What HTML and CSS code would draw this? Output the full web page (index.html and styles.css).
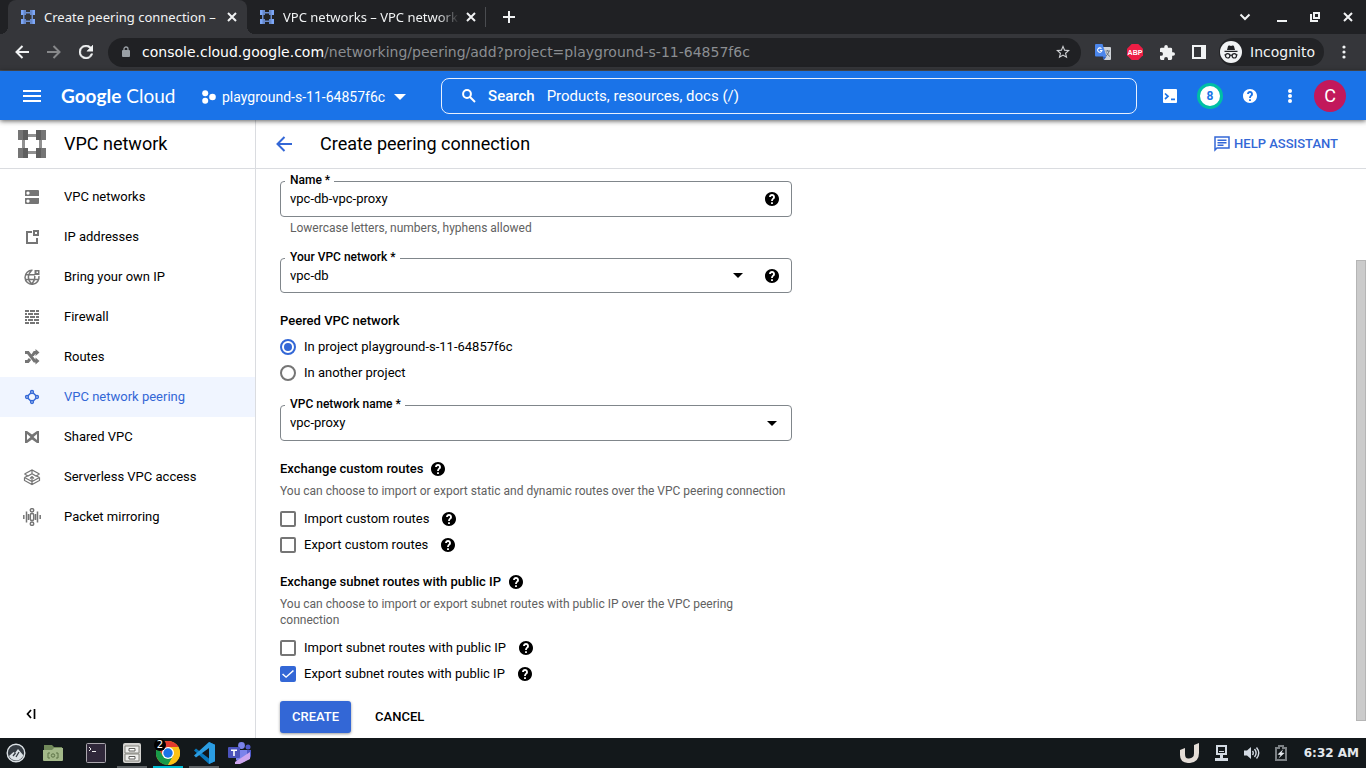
FILE: index.html
```html
<!DOCTYPE html>
<html lang="en">
<head>
<meta charset="utf-8">
<title>Create peering connection – VPC network</title>
<link rel="stylesheet" href="styles.css">
</head>
<body>
<svg class="defs" aria-hidden="true">
  <symbol id="vpc" viewBox="0 0 28 28">
    <path fill="currentColor" d="M9 4h10v3H9zM9 21h10v3H9zM4 9h3v10H4zM21 9h3v10h-3z" opacity=".8"/>
    <path fill="currentColor" d="M0 0h10v10H0zM18 0h10v10H18zM0 18h10v10H0zM18 18h10v10H18z"/>
    <path fill="#000" opacity=".18" d="M5 0h5v10H5zM18 0h5v10h-5zM5 18h5v10H5zM18 18h5v10h-5z"/>
  </symbol>
  <symbol id="help" viewBox="2 2 20 20">
    <path fill="currentColor" d="M12 2C6.48 2 2 6.48 2 12s4.48 10 10 10 10-4.48 10-10S17.52 2 12 2zm1.3 17h-2.600v-2.500h2.600zm2.200-7.500l-.9.92C13.700 13.100 13.300 13.700 13.300 15h-2.600v-.5c0-1.200.5-2.300 1.170-3l1.240-1.260c.3-.3.400-.7.400-1.100 0-.9-.7-1.500-1.500-1.500s-1.500.7-1.500 1.500H7.800c0-2.300 1.900-4.200 4.200-4.200s4.200 1.900 4.200 4.200c0 .88-.3 1.700-.7 2.400z"/>
  </symbol>
  <symbol id="close" viewBox="0 0 10 10"><path d="M1 1l8 8M9 1L1 9" stroke="currentColor" stroke-width="2"/></symbol>
  <symbol id="caret" viewBox="0 0 10 5"><path fill="currentColor" d="M0 0h10L5 5z"/></symbol>
</svg>

<header class="tabstrip">
  <div class="tab tab-active">
    <svg class="favicon" width="14" height="14"><use href="#vpc"/></svg>
    <span class="tab-title">Create peering connection –</span>
    <button class="bare tab-close" aria-label="Close tab"><svg width="10" height="10"><use href="#close"/></svg></button>
  </div>
  <div class="tab tab-idle">
    <svg class="favicon" width="14" height="14"><use href="#vpc"/></svg>
    <span class="tab-title">VPC networks – VPC network</span>
    <button class="bare tab-close" aria-label="Close tab"><svg width="10" height="10"><use href="#close"/></svg></button>
  </div>
  <button class="bare new-tab" aria-label="New tab"><svg width="12" height="12" viewBox="0 0 12 12"><path d="M6 0v12M0 6h12" stroke="currentColor" stroke-width="2"/></svg></button>
  <div class="window-controls">
    <button class="bare" aria-label="Search tabs"><svg width="12" height="8" viewBox="0 0 12 8"><path d="M1.500 1.500L6 6l4.500-4.500" fill="none" stroke="currentColor" stroke-width="2"/></svg></button>
    <button class="bare" aria-label="Minimise"><svg width="10" height="10" viewBox="0 0 10 10"><path d="M0 9h10" stroke="currentColor" stroke-width="2"/></svg></button>
    <button class="bare" aria-label="Restore"><svg width="10" height="10" viewBox="0 0 10 10" fill="none" stroke="currentColor" stroke-width="2"><path d="M4 1h5v5H4z"/><path d="M1 2v7h7"/></svg></button>
    <button class="bare" aria-label="Close window"><svg width="10" height="10"><use href="#close"/></svg></button>
  </div>
</header>

<nav class="toolbar" aria-label="Browser">
  <button class="bare" aria-label="Back"><svg width="14" height="14" viewBox="0 0 14 14" fill="none" stroke="currentColor" stroke-width="2"><path d="M14 7H1.500M7.500 1l-6 6 6 6"/></svg></button>
  <button class="bare dim" aria-label="Forward"><svg width="14" height="14" viewBox="0 0 14 14" fill="none" stroke="currentColor" stroke-width="2"><path d="M0 7h12.500M6.500 1l6 6-6 6"/></svg></button>
  <button class="bare" aria-label="Reload"><svg width="14" height="14" viewBox="4 4 16 16"><path fill="currentColor" stroke="currentColor" stroke-width=".6" d="M17.650 6.350A8 8 0 1 0 19.730 14h-2.080A6 6 0 1 1 12 6c1.660 0 3.140.69 4.220 1.780L13 11h7V4z"/></svg></button>
  <div class="urlbar">
    <svg width="8" height="12" viewBox="0 0 8 12"><rect y="4" width="8" height="7" rx="1" fill="#9aa0a6"/><path d="M2 5V3a2 2 0 0 1 4 0v2" fill="none" stroke="#9aa0a6" stroke-width="1.300"/></svg>
    <span class="url"><b>console.cloud.google.com</b>/networking/peering/add?project=playground-s-11-64857f6c</span>
    <button class="bare" aria-label="Bookmark"><svg width="14" height="14" viewBox="2 2 20 20"><path fill="currentColor" d="M22 9.240l-7.190-.62L12 2 9.190 8.630 2 9.240l5.460 4.730L5.820 21 12 17.270 18.180 21l-1.630-7.030zM12 15.400l-3.760 2.270 1-4.280-3.320-2.880 4.380-.38L12 6.100l1.710 4.040 4.380.38-3.320 2.880 1 4.280z"/></svg></button>
  </div>
  <button class="bare" aria-label="Translate"><svg width="16" height="16" viewBox="0 0 16 16"><path fill="#cfd3d8" d="M6 3h9a1 1 0 0 1 1 1v11a1 1 0 0 1-1 1H9z"/><path fill="#4b86ec" d="M1 0h6.500l4 12.500H1a1 1 0 0 1-1-1V1a1 1 0 0 1 1-1z"/><path fill="#2b5fc4" d="M7.500 12.500h4L9 16z"/><path d="M6.500 4.600A2.200 2.200 0 1 0 7 6.500H5" fill="none" stroke="#fff" stroke-width="1.100"/><path d="M10.500 7h4.500M12.500 6v1M14 7q-.5 3-3 5M11.500 8.500q1 2.500 3.500 4" fill="none" stroke="#6d7781"/></svg></button>
  <button class="bare" aria-label="Adblock Plus"><svg width="16" height="16" viewBox="0 0 16 16"><path fill="#ed1e45" d="M4.700 0h6.600L16 4.700v6.600L11.300 16H4.700L0 11.300V4.700z"/><text x="8" y="10.700" class="abp">ABP</text></svg></button>
  <button class="bare" aria-label="Extensions"><svg width="15" height="15" viewBox="2 1 21 21"><path fill="currentColor" d="M20.500 11H19V7a2 2 0 0 0-2-2h-4V3.500a2.500 2.500 0 0 0-5 0V5H4a2 2 0 0 0-2 2v3.800h1.500a2.700 2.700 0 0 1 0 5.400H2V20a2 2 0 0 0 2 2h3.800v-1.500a2.700 2.700 0 0 1 5.400 0V22H17a2 2 0 0 0 2-2v-4h1.500a2.500 2.500 0 0 0 0-5z"/></svg></button>
  <button class="bare" aria-label="Side panel"><svg width="14" height="14" viewBox="0 0 14 14"><path fill="currentColor" fill-rule="evenodd" d="M0 0h14v14H0zM2 2v10h7V2z"/></svg></button>
  <div class="incognito">
    <svg width="22" height="22" viewBox="0 0 22 22"><circle cx="11" cy="11" r="11" fill="#f1f3f4"/><path fill="#202124" d="M7 9l1-3.700Q8.500 4 9.500 4.600q1.500.6 3 0Q13.500 4 14 5.300L15 9zM4.500 9.800h13V11h-13z"/><g fill="none" stroke="#202124" stroke-width="1.200"><circle cx="7.700" cy="14.800" r="2.200"/><circle cx="14.300" cy="14.800" r="2.200"/><path d="M10 14.500q1-.7 2 0M4.500 13.800h1M16.500 13.800h1"/></g></svg>
    <span>Incognito</span>
  </div>
  <button class="bare menu" aria-label="Menu"><svg width="4" height="14" viewBox="0 0 4 14" fill="currentColor"><circle cx="2" cy="2" r="1.600"/><circle cx="2" cy="7" r="1.600"/><circle cx="2" cy="12" r="1.600"/></svg></button>
</nav>

<header class="console-bar">
  <button class="bare" aria-label="Navigation menu"><svg width="18" height="12" viewBox="0 0 18 12"><path fill="currentColor" d="M0 0h18v2H0zM0 5h18v2H0zM0 10h18v2H0z"/></svg></button>
  <a class="brand" href="#"><b>Google</b> Cloud</a>
  <button class="bare project">
    <svg width="14" height="14" viewBox="0 0 14 14" fill="currentColor"><circle cx="3.200" cy="3.200" r="3"/><circle cx="3.200" cy="10.800" r="3"/><circle cx="10.500" cy="7" r="3.300"/></svg>
    <span>playground-s-11-64857f6c</span>
    <svg width="12" height="6" class="project-caret"><use href="#caret"/></svg>
  </button>
  <label class="search">
    <svg width="14" height="14" viewBox="0 0 14 14" fill="none" stroke="currentColor" stroke-width="2"><circle cx="5" cy="5" r="3.900"/><path d="M8 8l5 5"/></svg>
    <b>Search</b>
    <input type="search" placeholder="Products, resources, docs (/)">
  </label>
  <div class="console-actions">
    <button class="bare" aria-label="Cloud Shell"><svg width="14" height="14" viewBox="0 0 14 14"><rect width="14" height="14" rx="1" fill="#fff"/><path d="M2 4.500L5 7.300 2 10M8 10.300h4" fill="none" stroke="#1a73e8" stroke-width="1.700"/></svg></button>
    <button class="bare count" aria-label="8 notifications">8</button>
    <button class="bare" aria-label="Help"><svg width="14" height="14"><use href="#help"/></svg></button>
    <button class="bare" aria-label="More"><svg width="4" height="14" viewBox="0 0 4 14" fill="currentColor"><circle cx="2" cy="2" r="2"/><circle cx="2" cy="7" r="2"/><circle cx="2" cy="12" r="2"/></svg></button>
    <button class="bare avatar" aria-label="Account">C</button>
  </div>
</header>

<div class="workspace">
  <aside class="sidebar">
    <div class="product">
      <svg width="28" height="28"><use href="#vpc"/></svg>
      <h2>VPC network</h2>
    </div>
    <nav class="side-nav" aria-label="VPC network">
      <a href="#"><svg width="18" height="18" viewBox="0 0 18 18"><path fill="currentColor" fill-rule="evenodd" d="M2 3a1 1 0 0 1 1-1h12a1 1 0 0 1 1 1v5H2zM5 3.500a1.600 1.600 0 1 0 .01 0zM2 10h14v5a1 1 0 0 1-1 1H3a1 1 0 0 1-1-1zM5 11.500a1.600 1.600 0 1 0 .01 0z"/></svg>VPC networks</a>
      <a href="#"><svg width="18" height="18" viewBox="0 0 18 18"><path fill="none" stroke="currentColor" stroke-width="2" d="M9 4H4v11h10V10"/><path fill="currentColor" fill-rule="evenodd" d="M10 2h6v6h-6zM12 4v2h2V4z"/></svg>IP addresses</a>
      <a href="#"><svg width="18" height="18" viewBox="0 0 18 18"><g fill="none" stroke="currentColor" stroke-width="1.500"><path d="M9.500 2.300A7 7 0 1 0 15.900 8M2.500 6.700H12M2.300 11.500h13.400M8.500 2.500c-4 4-4 9 0 13.500 2.500-2.500 3.500-5 3.300-8"/></g><path fill="currentColor" d="M11.500 2h5v5h-5z"/><path fill="#fff" d="M13.500 3.500h1.500V5h-1.500z"/></svg>Bring your own IP</a>
      <a href="#"><svg width="18" height="18" viewBox="0 0 18 18"><path d="M2 3h4M7 3h5M13 3h3M2 6h2M5 6h5M11 6h5M2 9h4M7 9h5M13 9h3M2 12h2M5 12h5M11 12h5M2 15h4M7 15h5M13 15h3" stroke="currentColor" stroke-width="1.800"/></svg>Firewall</a>
      <a href="#"><svg width="18" height="18" viewBox="0 0 18 18"><g fill="none" stroke="currentColor" stroke-width="3"><path d="M2 4.500h3l6.500 8.500H14M2 13.500h3l2-2.500M9.500 7.500l2-3H14"/></g><path fill="currentColor" d="M12.500 1l4 3.500-4 3.500zM12.500 9.500l4 3.500-4 3.500z"/></svg>Routes</a>
      <a href="#" class="selected" aria-current="page"><svg width="18" height="18" viewBox="0 0 18 18" fill="none" stroke="currentColor" stroke-width="1.500"><circle cx="9" cy="4" r="1.400"/><circle cx="9" cy="14" r="1.400"/><circle cx="4" cy="9" r="1.400"/><circle cx="14" cy="9" r="1.400"/><path d="M7.800 5L5 7.800M10.200 5l2.800 2.800M5 10.200L7.800 13M13 10.200L10.200 13"/></svg>VPC network peering</a>
      <a href="#"><svg width="18" height="18" viewBox="0 0 18 18"><path fill="currentColor" fill-rule="evenodd" d="M2 3h2l5 3.500L14 3h2v12h-2l-5-3.500L4 15H2zM4 6v6l3.500-3zM14 6v6l-3.500-3z"/></svg>Shared VPC</a>
      <a href="#"><svg width="18" height="18" viewBox="0 0 18 18" fill="none" stroke="currentColor" stroke-width="1.200"><path d="M1.500 6L9 2l7.500 4M1.500 6L5 8l4-2.300L13 8l3.500-2M1.500 9.500L5 7.800M16.500 9.500L13 7.800M1.500 9.500v3L9 16.500l7.500-4v-3M1.500 9.500L9 13.500l7.500-4M9 2v3.700M9 9v7M7 10.500l2-2 2 2"/></svg>Serverless VPC access</a>
      <a href="#"><svg width="18" height="18" viewBox="0 0 18 18" fill="none" stroke="currentColor" stroke-width="1.500"><circle cx="9" cy="2.300" r="1.700"/><circle cx="9" cy="15.700" r="1.700"/><rect x="7.300" y="5.500" width="3.400" height="7" rx="1.500"/><path d="M.8 7v4M3.500 3.500v11M14.500 3.500v11M17.200 7v4M5.500 6v6M12.500 6v6"/></svg>Packet mirroring</a>
    </nav>
    <button class="bare collapse" aria-label="Collapse menu"><svg width="10" height="10" viewBox="0 0 10 10" fill="none" stroke="currentColor" stroke-width="1.700"><path d="M5 1L1.500 5 5 9M8.500 0v10"/></svg></button>
  </aside>

  <main class="page">
    <div class="page-head">
      <button class="bare back" aria-label="Back"><svg width="16" height="16" viewBox="0 0 16 16" fill="none" stroke="currentColor" stroke-width="2"><path d="M16 8H1.500M8.500 1l-7 7 7 7"/></svg></button>
      <h1>Create peering connection</h1>
      <button class="bare assistant"><svg width="16" height="16" viewBox="0 0 16 16" fill="none" stroke="currentColor" stroke-width="1.500"><path d="M1 14V1h14v11H3z"/><path d="M3.500 4.200h9M3.500 6.700h9M3.500 9.200h6"/></svg>HELP ASSISTANT</button>
    </div>
    <div class="page-body">
      <form class="form">
        <div class="field">
          <label for="name">Name *</label>
          <input id="name" type="text" value="vpc-db-vpc-proxy">
          <button type="button" class="bare help" aria-label="Help: name"><svg width="14" height="14"><use href="#help"/></svg></button>
        </div>
        <p class="hint">Lowercase letters, numbers, hyphens allowed</p>
        <div class="field field-network">
          <label for="network">Your VPC network *</label>
          <select id="network"><option>vpc-db</option></select>
          <svg class="caret caret-inner" width="10" height="5"><use href="#caret"/></svg>
          <button type="button" class="bare help" aria-label="Help: network"><svg width="14" height="14"><use href="#help"/></svg></button>
        </div>

        <h3 id="peered">Peered VPC network</h3>
        <div class="options" role="radiogroup" aria-labelledby="peered">
          <label><input type="radio" name="peer" checked>In project playground-s-11-64857f6c</label>
          <label><input type="radio" name="peer">In another project</label>
        </div>

        <div class="field field-peer">
          <label for="peer-network">VPC network name *</label>
          <select id="peer-network"><option>vpc-proxy</option></select>
          <svg class="caret" width="10" height="5"><use href="#caret"/></svg>
        </div>

        <h3>Exchange custom routes <button type="button" class="bare help" aria-label="Help: custom routes"><svg width="14" height="14"><use href="#help"/></svg></button></h3>
        <p class="note">You can choose to import or export static and dynamic routes over the VPC peering connection</p>
        <div class="options">
          <div class="option"><label><input type="checkbox">Import custom routes</label><button type="button" class="bare help" aria-label="Help: import"><svg width="14" height="14"><use href="#help"/></svg></button></div>
          <div class="option"><label><input type="checkbox">Export custom routes</label><button type="button" class="bare help" aria-label="Help: export"><svg width="14" height="14"><use href="#help"/></svg></button></div>
        </div>

        <h3>Exchange subnet routes with public IP <button type="button" class="bare help" aria-label="Help: subnet routes"><svg width="14" height="14"><use href="#help"/></svg></button></h3>
        <p class="note">You can choose to import or export subnet routes with public IP over the VPC peering connection</p>
        <div class="options">
          <div class="option"><label><input type="checkbox">Import subnet routes with public IP</label><button type="button" class="bare help" aria-label="Help: import subnet"><svg width="14" height="14"><use href="#help"/></svg></button></div>
          <div class="option"><label><input type="checkbox" checked>Export subnet routes with public IP</label><button type="button" class="bare help" aria-label="Help: export subnet"><svg width="14" height="14"><use href="#help"/></svg></button></div>
        </div>

        <div class="buttons">
          <button type="button" class="bare create">CREATE</button>
          <button type="button" class="bare cancel">CANCEL</button>
        </div>
      </form>
      <div class="scroll-track"><div class="scroll-thumb"></div></div>
    </div>
  </main>
</div>

<footer class="taskbar">
  <button class="bare launcher" aria-label="Menu"><svg width="20" height="20" viewBox="0 0 20 20"><circle cx="10" cy="10" r="8.800" fill="#343b42" stroke="#dbe1e5" stroke-width="1.400"/><path fill="#dbe1e5" d="M3 13l4.500-4 1.500 1 3-4 5.500 6.500Q14 18 10 17.500 5 17 3 13z"/><path d="M7 13l2.500-3M10 14l3-5" stroke="#343b42" stroke-width="1.300"/></svg></button>
  <button class="bare task files" aria-label="Files"><svg width="20" height="20" viewBox="0 0 20 20"><path fill="#71895a" d="M1 2h8l2 2h8v11H1z"/><path fill="#a4b98a" d="M0 7h9l2-2h9v12a1 1 0 0 1-1 1H1a1 1 0 0 1-1-1z"/><path d="M5 10v5h2M15 10v5h-2M5 10h2M13 10h2" stroke="#5d7347" fill="none"/><circle cx="10" cy="12.500" r="1.700" fill="none" stroke="#5d7347"/></svg></button>
  <button class="bare task terminal" aria-label="Terminal"><svg width="20" height="20" viewBox="0 0 20 20"><rect x=".5" y=".5" width="19" height="19" rx="1" fill="#30283a" stroke="#aaa6ad"/><path d="M3 4l2 2-2 2M6 8.500h4" fill="none" stroke="#eee"/></svg></button>
  <button class="bare task open" aria-label="Archive"><svg width="18" height="20" viewBox="0 0 18 20"><rect width="18" height="20" rx="2" fill="#d3d2cf"/><path d="M2 3h14v7H2zM2 11h14v7H2z" fill="#eeeeec" stroke="#85857f"/><path d="M6 5.500h6v2.500H6zM6 13.500h6V16H6z" fill="#fff" stroke="#61615d"/></svg></button>
  <button class="bare task open current" aria-label="Chrome"><svg width="24" height="24" viewBox="0 0 24 24"><circle cx="12" cy="12" r="12" fill="#fbc116"/><path fill="#e33b2e" d="M1.600 6A12 12 0 0 1 22.400 6H12L6.800 15z"/><path fill="#189a49" d="M1.600 6A12 12 0 0 0 12 24l5.200-9H6.800z"/><path fill="#fbc116" d="M22.400 6A12 12 0 0 1 12 24l5.200-9L12 6z"/><circle cx="12" cy="12" r="6" fill="#fff"/><circle cx="12" cy="12" r="4.700" fill="#1a73e8"/></svg><span class="badge">2</span></button>
  <button class="bare task open" aria-label="VS Code"><svg width="22" height="22" viewBox="0 0 22 22"><path fill="#0878bd" d="M16 0l6 2.700v16.600L16 22 1 8.500 3 6.500l13 10z"/><path fill="#2b9de2" d="M16 0l6 2.700v16.600L16 22V6L3 15.500 1 13.500z"/></svg></button>
  <button class="bare task" aria-label="Teams"><svg width="24" height="22" viewBox="0 0 24 22"><circle cx="20" cy="5" r="2.500" fill="#5059c9"/><circle cx="13.500" cy="3.500" r="3.400" fill="#7b83eb"/><path fill="#5059c9" d="M17 8h6v6a4 4 0 0 1-6 3z"/><path fill="#7b83eb" d="M8 8h11v7a6 6 0 0 1-11 3z"/><rect y="5" width="12" height="11" rx="1" fill="#4b53bc"/><path fill="#fff" d="M3 7.500h6v1.500H6.800V14H5.200V9H3z"/><path fill="#cda6ef" d="M7 20L22 10v7l-10 5H7z"/></svg></button>
  <div class="tray">
    <svg width="20" height="20" viewBox="0 0 20 20"><path fill="#e4ddd7" d="M0 7l5-2v6q0 5 4 4.500 5-.5 5-5V2l5-2v10q0 9-9 10Q0 20.500 0 12z"/></svg>
    <svg width="14" height="16" viewBox="0 0 14 16"><path fill="#d3dae3" fill-rule="evenodd" d="M1 0h11v10H8v3h5v3H0v-3h5v-3H1zM3 2v6h7V2z"/><path stroke="#d3dae3" d="M4 6.500h5"/></svg>
    <svg width="16" height="14" viewBox="0 0 16 14"><path fill="#d3dae3" d="M0 4.500h3L7 1v12L3 9.500H0z"/><path d="M8.500 5q1.500 2 0 4M10.500 3q3.200 4 0 8M12.500 1.500q4.500 5.500 0 11" fill="none" stroke="#d3dae3" stroke-width="1.400"/></svg>
    <svg width="12" height="16" viewBox="0 0 12 16"><path fill="none" stroke="#7b8084" stroke-width="2" d="M1 3h3V1h4v2h3v12H1z"/><path fill="#e4e8ed" d="M8.500 4L2.500 9.500l3 .5-2 3.500 6-5.500-3-.5z"/></svg>
    <time>6:32 AM</time>
  </div>
</footer>
</body>
</html>
```
FILE: styles.css
```css
* {
  box-sizing: border-box;
}

body {
  margin: 0;
  height: 100vh;
  display: flex;
  flex-direction: column;
  overflow: hidden;
  font: 13px/16px Roboto, sans-serif;
  color: #000;
  background: #fff;
}

.defs {
  display: none;
}

svg {
  flex: none;
}

h1, h2, h3, p {
  margin: 0;
}

.bare {
  display: flex;
  align-items: center;
  justify-content: center;
  padding: 0;
  border: 0;
  background: none;
  color: inherit;
  font: inherit;
}

/* Browser tabs */
.tabstrip {
  flex: none;
  display: flex;
  height: 34px;
  padding: 0 2px 0 8px;
  background: #202124;
  color: #f1f3f4;
  font: 13px/16px "Noto Sans", sans-serif;
}

.tab {
  position: relative;
  display: flex;
  align-items: center;
  width: 239px;
  padding: 0 7px 0 13px;
}

.tab-active {
  background: #35363a;
  border-radius: 8px 8px 0 0;
}

.tab-active::before,
.tab-active::after {
  content: "";
  position: absolute;
  bottom: 0;
  width: 8px;
  height: 8px;
}

.tab-active::before {
  right: 100%;
  background: radial-gradient(circle at 0 0, transparent 8px, #35363a 8px);
}

.tab-active::after {
  left: 100%;
  background: radial-gradient(circle at 100% 0, transparent 8px, #35363a 8px);
}

.tab-idle::after {
  content: "";
  position: absolute;
  right: 0;
  top: 7px;
  height: 20px;
  border-right: 1px solid #4a4c50;
}

.favicon {
  color: #7da7f7;
}

.tab-title {
  flex: 1;
  min-width: 0;
  margin-left: 9px;
  white-space: nowrap;
}

.tab-idle .tab-title {
  mask-image: linear-gradient(to right, #000 86%, transparent 98%);
}

.tab-close {
  width: 16px;
  height: 16px;
}

.new-tab {
  width: 46px;
}

.window-controls {
  display: flex;
  gap: 1px;
  margin-left: auto;
}

.window-controls .bare {
  width: 32px;
}

.window-controls .bare:first-child {
  margin-right: 4px;
}

/* Browser toolbar */
.toolbar {
  flex: none;
  display: flex;
  align-items: center;
  height: 37px;
  padding: 0 6px;
  background: #35363a;
  border-bottom: 1px solid #505256;
  color: #f1f3f4;
  font: 14px/18px "DejaVu Sans", sans-serif;
}

.toolbar > .bare {
  width: 32px;
  height: 28px;
}

.toolbar > .dim {
  color: #87888a;
}

.urlbar {
  flex: 1;
  min-width: 0;
  display: flex;
  align-items: center;
  height: 29px;
  margin: 0 6px;
  padding: 0 11px 0 14px;
  border-radius: 15px;
  background: #202124;
  color: #d0d2d5;
}

.url {
  flex: 1;
  margin-left: 12px;
  color: #8b8e92;
  white-space: nowrap;
  overflow: hidden;
}

.url b {
  font-weight: normal;
  color: #fff;
}

.abp {
  font: bold 7px "Liberation Sans", sans-serif;
  fill: #fff;
  text-anchor: middle;
}

.incognito {
  display: flex;
  align-items: center;
  gap: 8px;
  height: 28px;
  margin: 0 4px;
  padding: 0 9px 0 1px;
  border-radius: 14px;
  background: #222326;
}

/* Cloud console bar */
.console-bar {
  flex: none;
  position: relative;
  z-index: 1;
  display: flex;
  align-items: center;
  height: 49px;
  padding: 0 16px 0 23px;
  background: #1a73e8;
  color: #fff;
  font-size: 14px;
  box-shadow: 0 1px 5px rgba(0, 0, 0, .65);
}

.brand {
  width: 121px;
  margin-left: 20px;
  color: #fff;
  font: 19px/24px Lato, sans-serif;
  text-decoration: none;
  white-space: nowrap;
}

.brand b {
  font-weight: 700;
}

.project {
  gap: 6px;
  margin: 2px 0 0 20px;
}

.project-caret {
  margin-left: 3px;
}

.search {
  flex: 1;
  min-width: 0;
  display: flex;
  align-items: center;
  height: 36px;
  margin: 1px 13px 0 35px;
  padding: 0 20px;
  border: 1px solid #e8f0fe;
  border-radius: 8px;
  font-size: 15px;
}

.search b {
  margin: 0 12px;
  font-weight: 500;
}

.search input {
  flex: 1;
  min-width: 0;
  padding: 0;
  border: 0;
  background: none;
  color: #fff;
  font: inherit;
}

.search input::placeholder {
  color: #fff;
  opacity: 1;
}

.console-actions {
  display: flex;
  align-items: center;
}

.console-actions .bare {
  width: 40px;
  height: 40px;
}

.console-actions .count {
  width: 26px;
  height: 26px;
  margin: 0 7px;
  border: 3px solid #00bfa5;
  border-radius: 50%;
  background: #fff;
  color: #1a73e8;
  font-size: 12px;
  font-weight: 700;
}

.console-actions .avatar {
  width: 32px;
  height: 32px;
  margin: 0 4px;
  border-radius: 50%;
  background: #c2185b;
  font-size: 18px;
}

/* Workspace */
.workspace {
  flex: 1;
  min-height: 0;
  display: flex;
}

.sidebar {
  flex: none;
  width: 256px;
  display: flex;
  flex-direction: column;
  border-right: 1px solid #dadce0;
}

.product {
  display: flex;
  align-items: center;
  gap: 18px;
  height: 49px;
  padding-left: 18px;
  border-bottom: 1px solid #dadce0;
  color: #757575;
}

h1, h2 {
  font-size: 18px;
  line-height: 24px;
  font-weight: 400;
  color: #000;
}

.side-nav {
  flex: 1;
  padding-top: 8px;
}

.side-nav a {
  display: flex;
  align-items: center;
  gap: 23px;
  height: 40px;
  padding-left: 23px;
  color: #000;
  text-decoration: none;
}

.side-nav svg {
  color: #757575;
}

.side-nav .selected,
.side-nav .selected svg {
  color: #3367d6;
}

.side-nav .selected {
  background: #f0f5ff;
}

.collapse {
  width: 62px;
  height: 48px;
}

.page {
  flex: 1;
  min-width: 0;
  display: flex;
  flex-direction: column;
}

.page-head {
  flex: none;
  display: flex;
  align-items: center;
  height: 49px;
  padding: 0 28px 0 20px;
  border-bottom: 1px solid #dadce0;
}

.page-head h1 {
  margin-left: 28px;
}

.back,
.assistant {
  color: #3367d6;
}

.assistant {
  gap: 4px;
  margin-left: auto;
  font-weight: 500;
}

.page-body {
  flex: 1;
  min-height: 0;
  display: flex;
  justify-content: space-between;
}

.form {
  width: 536px;
  padding: 12px 0 0 24px;
}

.field {
  position: relative;
  display: flex;
  align-items: center;
  height: 36px;
  border: 1px solid #80868b;
  border-radius: 4px;
}

.field-network {
  height: 35px;
}

.field label {
  position: absolute;
  top: -10px;
  left: 4px;
  padding: 0 4px 0 5px;
  background: #fff;
  font-size: 12px;
  font-weight: 500;
}

.field input,
.field select {
  flex: 1;
  align-self: stretch;
  min-width: 0;
  padding: 0 9px;
  border: 0;
  background: none;
  appearance: none;
  color: #000;
  font: inherit;
}

.field .help {
  margin-right: 12px;
}

.caret {
  margin-right: 14px;
}

.caret-inner {
  margin-right: 22px;
}

.hint {
  margin: 3px 0 22px 10px;
  font-size: 12px;
  color: #616161;
}

h3 {
  display: flex;
  align-items: center;
  gap: 8px;
  margin-top: 20px;
  font-size: 13px;
  line-height: 16px;
  font-weight: 500;
}

.options + h3 {
  margin-top: 16px;
}

.options {
  margin-top: 5px;
}

.options label {
  display: flex;
  align-items: center;
  gap: 8px;
  height: 26px;
}

.options input {
  width: 16px;
  height: 16px;
  margin: 0;
  appearance: none;
  border: 2px solid #757575;
  border-radius: 2px;
  display: grid;
  place-items: center;
}

.options input[type="radio"] {
  border-radius: 50%;
}

.options input:checked {
  border-color: #3367d6;
}

.options input[type="radio"]:checked::before {
  content: "";
  width: 8px;
  height: 8px;
  border-radius: 50%;
  background: #3367d6;
}

.options input[type="checkbox"]:checked {
  background: #3367d6;
}

.options input[type="checkbox"]:checked::before {
  content: "";
  width: 12px;
  height: 8px;
  background: #fff;
  clip-path: polygon(0 55%, 9% 43%, 34% 78%, 91% 0, 100% 12%, 34% 100%);
}

.option {
  display: flex;
  align-items: center;
  gap: 13px;
}

.field-peer {
  margin-top: 19px;
}

.note {
  margin-top: 6px;
  font-size: 12px;
  color: #616161;
}

.note + .options {
  margin-top: 7px;
}

.buttons {
  display: flex;
  gap: 12px;
  margin-top: 14px;
}

.create,
.cancel {
  height: 32px;
  padding: 0 12px;
  border-radius: 3px;
  font-weight: 500;
}

.create {
  background: #3367d6;
  color: #fff;
  box-shadow: 0 1px 3px rgba(0, 0, 0, .4);
}

.scroll-track {
  width: 10px;
  display: grid;
  grid-template-rows: 16% 81% 3%;
}

.scroll-thumb {
  grid-row: 2;
  border: 1px solid #b5b5b5;
  background: #cbcbcb;
}

/* Desktop taskbar */
.taskbar {
  flex: none;
  display: flex;
  height: 30px;
  background: #13181b;
  color: #fff;
}

.launcher {
  width: 31px;
}

.task {
  position: relative;
  width: 36px;
}

.files {
  margin: 0 7px 0 4px;
}

.open::after {
  content: "";
  position: absolute;
  left: 3px;
  right: 3px;
  bottom: 0;
  height: 2px;
  background: #5d6265;
}

.current::after {
  background: #00bcd4;
}

.badge {
  position: absolute;
  top: 1px;
  left: 4px;
  width: 12px;
  height: 12px;
  border-radius: 50%;
  background: #000;
  font: 10px/12px "DejaVu Sans", sans-serif;
  text-align: center;
}

.tray {
  display: flex;
  align-items: center;
  gap: 15px;
  margin-left: auto;
  padding-right: 7px;
  font: bold 12px/16px "DejaVu Sans", sans-serif;
  color: #e4e8ed;
}

.tray time {
  margin-left: 2px;
}
```
